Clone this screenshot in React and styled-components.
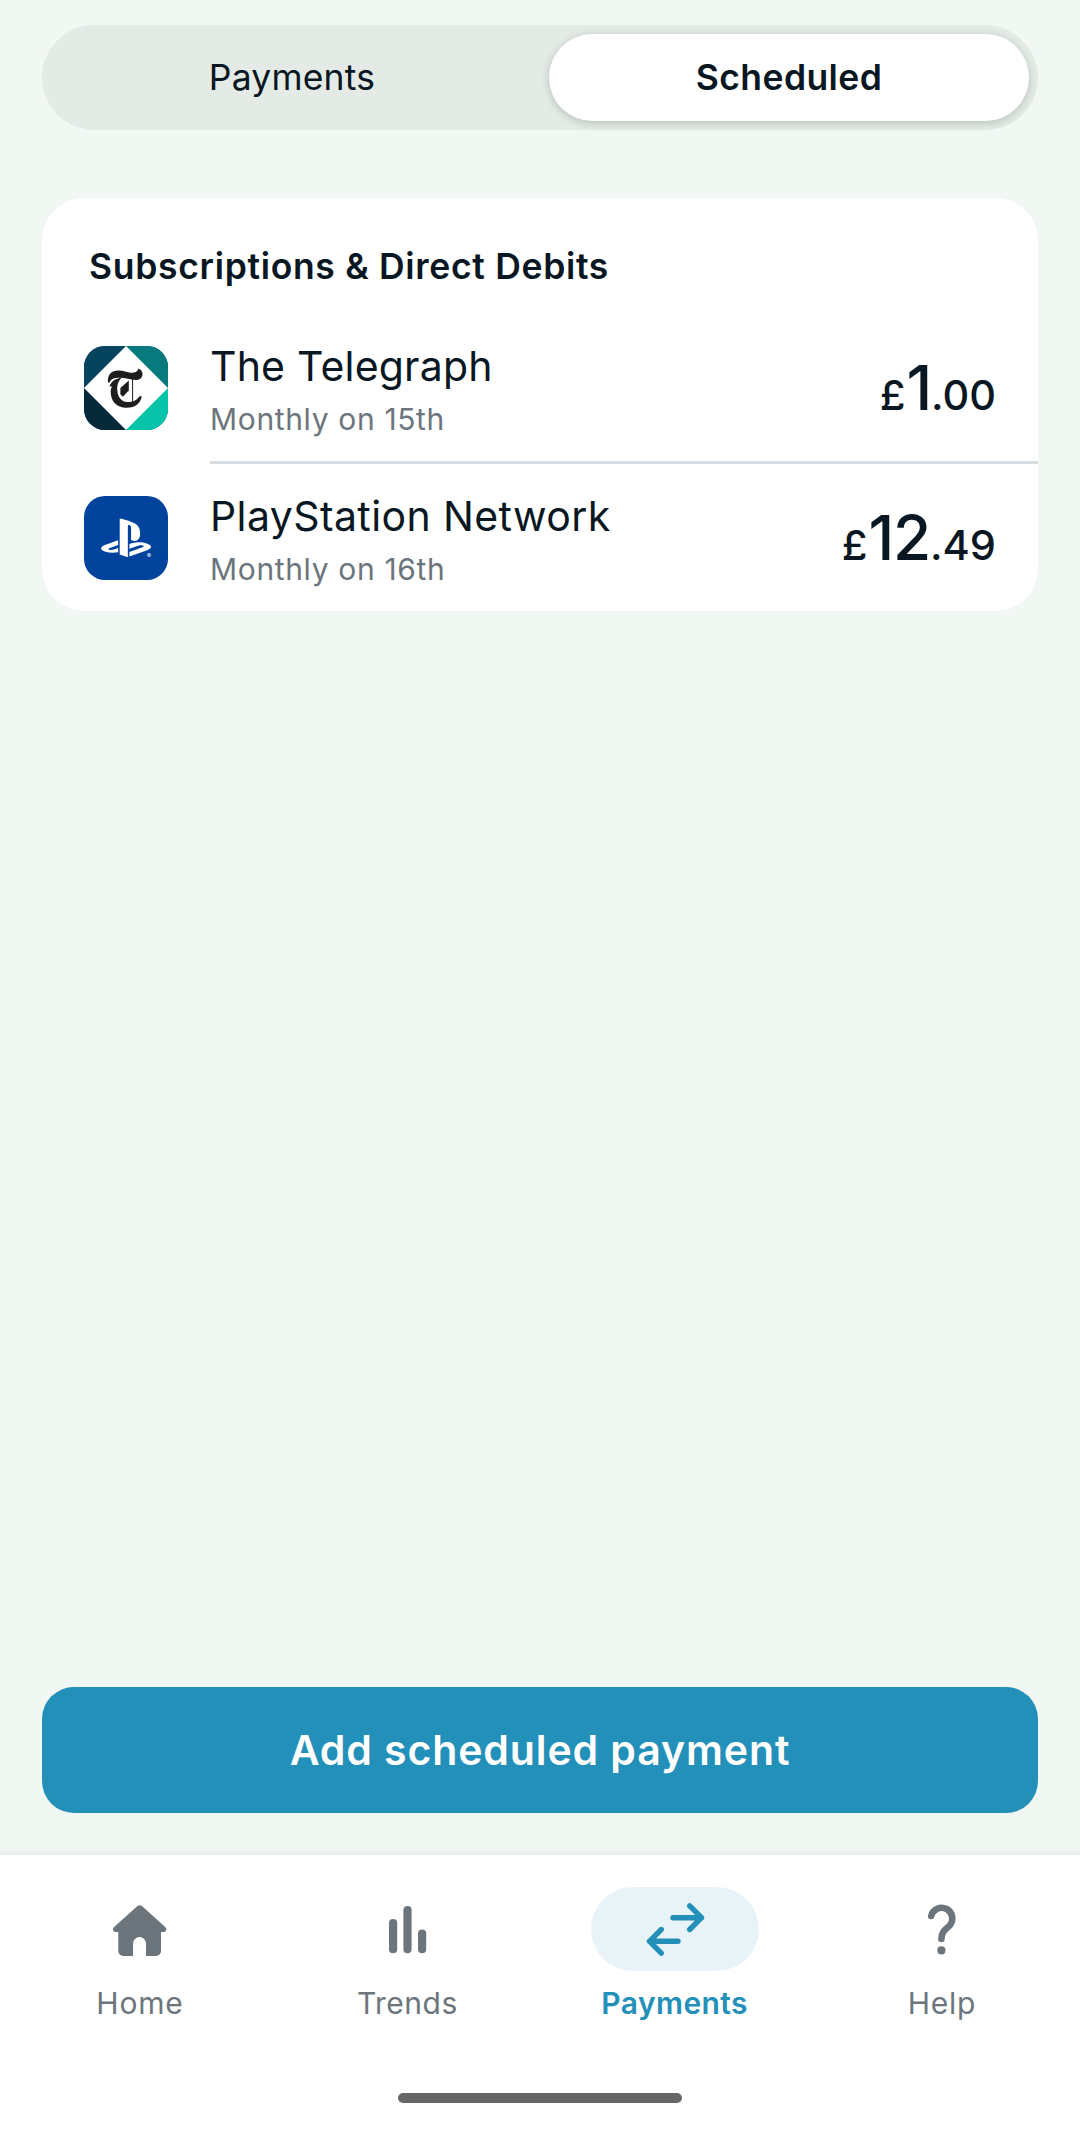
import styled, { createGlobalStyle } from "styled-components";
import { FaPlaystation } from "react-icons/fa6";

const payments = [
  { id: 1, name: "The Telegraph", when: "Monthly on 15th", pounds: "1", pence: ".00", logo: "telegraph", nameGap: "0.2px" },
  { id: 2, name: "PlayStation Network", when: "Monthly on 16th", pounds: "12", pence: ".49", logo: "playstation", nameGap: "0.4px" },
];

const TelegraphLogo = () => (
  <svg width="84" height="84" viewBox="0 0 84 84">
    <path fill="#06445d" d="M0 0h42v42H0z" />
    <path fill="#087a7d" d="M42 0h42v42H42z" />
    <path fill="#052939" d="M0 42h42v42H0z" />
    <path fill="#07c3aa" d="M42 42h42v42H42z" />
    <path fill="#fff" d="M42 0l42 42-42 42L0 42z" />
    <path
      fill="#1d1d1b"
      d="M24 36.500c-.6-6 1.500-11.500 9.500-12 6-.3 9 2 13.500 2.200 4 .2 6.500-1 7.500-4.200 2.500 1 4 3 4 5.500 0 4-3 6-7 6-5 0-10-2.200-16-2.200-5 0-8.500 1-10 4.700z"
    />
    <path
      fill="#1d1d1b"
      d="M38 31.500c-4 3.500-5 8-4.700 13 .5 6.500 3.700 11 10 11.500 6 .3 9.500-2 12-5.500l2.400-.5c-.7 7-6.200 11.800-15 11.800-10.200 0-16-6.500-16-16 0-2.300.5-3.800 1.300-5.300H25.500c1.500-5 5.500-8 12.500-9z"
    />
    <path fill="#1d1d1b" d="M44.800 34.500v10l-6 6.200-2.400-2.200v-6.500z" />
    <path stroke="#1d1d1b" strokeWidth="1" fill="none" d="M48.600 32v25" />
  </svg>
);

const HomeIcon = () => (
  <svg width="168" height="84" viewBox="0 0 168 84">
    <path
      fill="currentColor"
      d="M81.2 19.3a4 4 0 0 1 5 0l23 20.6c2 1.9 1 5.1-1.7 5.1H105v19a5 5 0 0 1-5 5H90V56.500a6.500 6.500 0 0 0-13 0V69H67.300a5 5 0 0 1-5-5V45h-2.500c-2.700 0-3.700-3.200-1.700-5.100z"
    />
  </svg>
);

const TrendsIcon = () => (
  <svg width="168" height="84" viewBox="0 0 168 84" fill="currentColor">
    <rect x="66" y="32" width="8.2" height="34.3" rx="4.1" />
    <rect x="80.4" y="19" width="8.2" height="47.3" rx="4.1" />
    <rect x="95" y="42.5" width="8.2" height="23.8" rx="4.1" />
  </svg>
);

const TransferIcon = () => (
  <svg width="168" height="84" viewBox="0 0 168 84" fill="none" stroke="currentColor" strokeWidth="5.4" strokeLinecap="round" strokeLinejoin="round">
    <path d="M82 30.700h28.500M98.700 18.900l11.800 11.800-11.800 11.800" />
    <path d="M87 54.300H58.500M70.300 42.500L58.500 54.300l11.800 11.800" />
  </svg>
);

const HelpIcon = () => (
  <svg width="168" height="84" viewBox="0 0 168 84" fill="none">
    <path
      stroke="currentColor"
      strokeWidth="6.6"
      strokeLinecap="round"
      d="M73.200 29A10.700 10.700 0 1 1 91.500 38.700C87.500 42 83.400 45 83.400 52"
    />
    <circle cx="83.4" cy="63.4" r="4.1" fill="currentColor" />
  </svg>
);

const menus = [
  { label: "Home", icon: <HomeIcon />, gap: "0.8px" },
  { label: "Trends", icon: <TrendsIcon />, gap: "0.5px" },
  { label: "Payments", icon: <TransferIcon />, gap: "0.4px", active: true },
  { label: "Help", icon: <HelpIcon />, gap: "0.8px" },
];

const App = () => {
  return (
    <>
      <GlobalStyle />
      <Screen>
        <Content>
          <TabBar>
            <Tab>Payments</Tab>
            <Tab $active>Scheduled</Tab>
          </TabBar>
          <Card>
            <CardTitle>Subscriptions &amp; Direct Debits</CardTitle>
            {payments.map((item, i) => (
              <div key={item.id}>
                {i > 0 && <Divider />}
                <PaymentRow>
                  <LogoBox>
                    {item.logo === "telegraph" ? (
                      <TelegraphLogo />
                    ) : (
                      <>
                        <FaPlaystation size={50} />
                        <Registered>®</Registered>
                      </>
                    )}
                  </LogoBox>
                  <PaymentInfo>
                    <PaymentName $gap={item.nameGap}>{item.name}</PaymentName>
                    <PaymentDate>{item.when}</PaymentDate>
                  </PaymentInfo>
                  <Amount>
                    £<Pounds>{item.pounds}</Pounds>
                    {item.pence}
                  </Amount>
                </PaymentRow>
              </div>
            ))}
          </Card>
          <AddButton>Add scheduled payment</AddButton>
        </Content>
        <BottomBar>
          <Menu>
            {menus.map((menu) => (
              <MenuItem key={menu.label} $active={menu.active}>
                <MenuIcon $active={menu.active}>{menu.icon}</MenuIcon>
                <MenuLabel $active={menu.active} $gap={menu.gap}>{menu.label}</MenuLabel>
              </MenuItem>
            ))}
          </Menu>
          <HomeIndicator />
        </BottomBar>
      </Screen>
    </>
  );
};
export default App;

const GlobalStyle = createGlobalStyle`
  * {
    box-sizing: border-box;
  }
  body {
    margin: 0;
    background-color: #f1f7f3;
    font-family: Inter, "Noto Sans", sans-serif;
    color: #081722;
  }
  button {
    border: none;
    padding: 0;
    background: none;
    font-family: inherit;
    color: inherit;
  }
  svg {
    display: block;
  }
`;

const Screen = styled.div`
  display: flex;
  flex-direction: column;
  width: 1080px;
  height: 2129px;
  background-color: #f1f7f3;
`;

const Content = styled.main`
  flex: 1;
  display: flex;
  flex-direction: column;
  padding: 25px 42px 42px;
`;

const TabBar = styled.div`
  display: flex;
  justify-content: space-between;
  height: 105px;
  padding: 9px;
  border-radius: 53px;
  background-color: #e4ebe6;
  overflow: hidden;
`;

const Tab = styled.button`
  width: ${(props) => (props.$active ? "480px" : "482px")};
  height: 87px;
  border-radius: 44px;
  font-size: 35.5px;
  line-height: 87px;
  font-weight: ${(props) => (props.$active ? 600 : 400)};
  letter-spacing: ${(props) => (props.$active ? "0.4px" : "0.2px")};
  background-color: ${(props) => (props.$active ? "#fff" : "transparent")};
  box-shadow: ${(props) => (props.$active ? "0 2px 8px rgba(20, 40, 30, 0.22)" : "none")};
`;

const Card = styled.section`
  height: 413px;
  margin-top: 68px;
  border-radius: 42px;
  background-color: #fff;
  overflow: hidden;
`;

const CardTitle = styled.h2`
  margin: 0;
  padding: 49px 0 27px 47px;
  font-size: 35.5px;
  line-height: 40px;
  font-weight: 600;
  letter-spacing: 0.68px;
`;

const Divider = styled.div`
  height: 3px;
  margin: -1px 0 0 168px;
  background-color: #d7dde0;
`;

const PaymentRow = styled.div`
  display: flex;
  align-items: center;
  height: 148px;
  padding: 0 42px;
`;

const LogoBox = styled.div`
  position: relative;
  display: flex;
  align-items: center;
  justify-content: center;
  width: 84px;
  height: 84px;
  border-radius: 21px;
  background-color: #00439c;
  color: #fff;
  overflow: hidden;
`;

const Registered = styled.span`
  position: absolute;
  right: 17px;
  bottom: 21px;
  font-size: 6px;
  line-height: 6px;
`;

const PaymentInfo = styled.div`
  flex: 1;
  margin-left: 42px;
  padding-top: 9px;
`;

const PaymentName = styled.div`
  font-size: 41px;
  line-height: 52px;
  letter-spacing: ${(props) => props.$gap};
`;

const PaymentDate = styled.div`
  font-size: 30px;
  line-height: 54px;
  letter-spacing: 0.65px;
  color: #6c757c;
`;

const Amount = styled.div`
  padding-top: 6px;
  font-size: 41.5px;
  line-height: 84px;
  font-weight: 550;
`;

const Pounds = styled.span`
  margin-left: 1px;
  font-size: 62px;
  line-height: 84px;
  font-weight: 500;
  letter-spacing: -1.2px;
`;

const AddButton = styled.button`
  height: 126px;
  margin-top: auto;
  border-radius: 32px;
  background-color: #2390b9;
  color: #fff;
  font-size: 41px;
  line-height: 126px;
  font-weight: 600;
  letter-spacing: 0.9px;
`;

const BottomBar = styled.footer`
  height: 274px;
  background-color: #fff;
  box-shadow: 0 0 6px rgba(20, 50, 40, 0.1);
`;

const Menu = styled.nav`
  display: flex;
  justify-content: space-between;
  padding: 32px 54px 0 56px;
`;

const MenuItem = styled.button`
  width: 168px;
  color: ${(props) => (props.$active ? "#2390b9" : "#6c757c")};
`;

const MenuIcon = styled.div`
  height: 84px;
  border-radius: 42px;
  background-color: ${(props) => (props.$active ? "#e8f3f8" : "transparent")};
`;

const MenuLabel = styled.div`
  margin-top: 12px;
  font-size: 30px;
  line-height: 40px;
  font-weight: ${(props) => (props.$active ? 600 : 400)};
  letter-spacing: ${(props) => props.$gap};
`;

const HomeIndicator = styled.div`
  width: 284px;
  height: 10px;
  margin: 70px auto 0;
  border-radius: 5px;
  background-color: #666;
`;
